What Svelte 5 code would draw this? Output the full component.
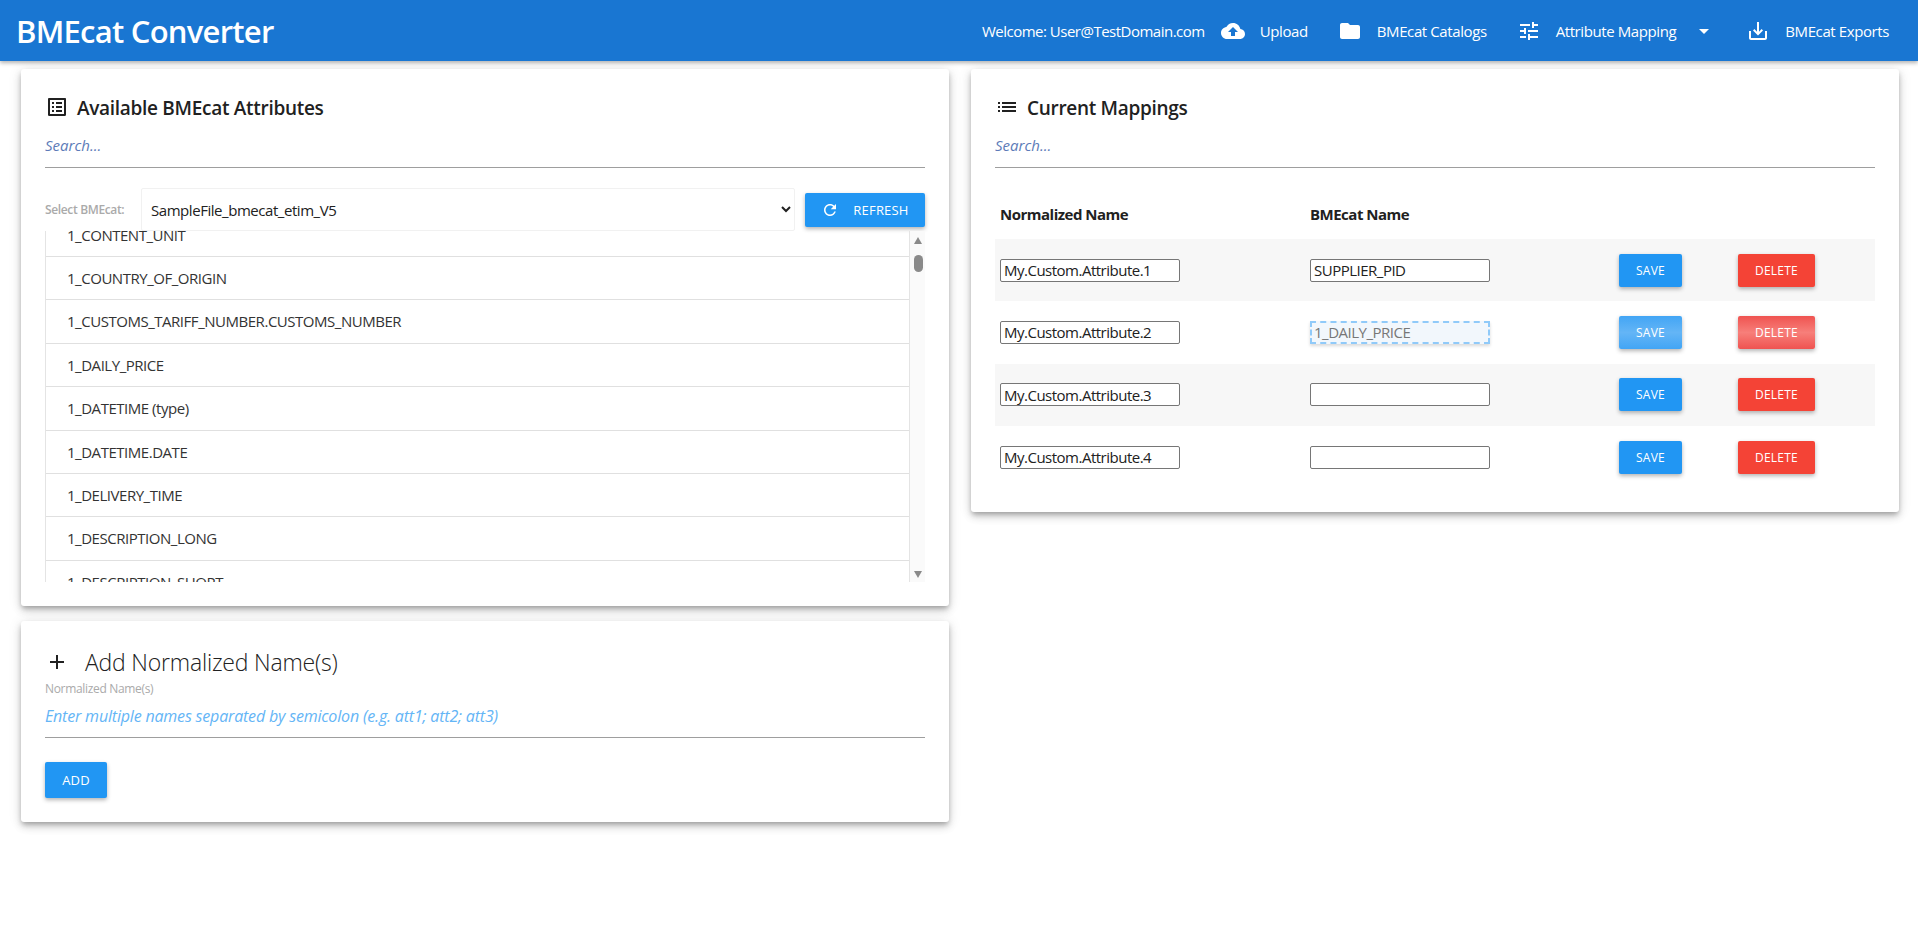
<script>
	const icons = {
		listAlt: 'M19 5v14H5V5h14m1.1-2H3.9c-.5 0-.9.4-.9.9v16.2c0 .4.4.9.9.9h16.2c.4 0 .9-.5.9-.9V3.9c0-.5-.5-.9-.9-.9zM11 7h6v2h-6V7zm0 4h6v2h-6v-2zm0 4h6v2h-6zM7 7h2v2H7zm0 4h2v2H7zm0 4h2v2H7z',
		list: 'M3 13h2v-2H3v2zm0 4h2v-2H3v2zm0-8h2V7H3v2zm4 4h14v-2H7v2zm0 4h14v-2H7v2zM7 7v2h14V7H7z',
		upload: 'M19.35 10.04C18.67 6.59 15.64 4 12 4 9.11 4 6.6 5.64 5.35 8.04 2.34 8.36 0 10.91 0 14c0 3.31 2.69 6 6 6h13c2.76 0 5-2.24 5-5 0-2.64-2.05-4.78-4.65-4.96zM14 13v4h-4v-4H7l5-5 5 5h-3z',
		folder: 'M10 4H4c-1.1 0-1.99.9-1.99 2L2 18c0 1.1.9 2 2 2h16c1.1 0 2-.9 2-2V8c0-1.1-.9-2-2-2h-8l-2-2z',
		tune: 'M3 17v2h6v-2H3zM3 5v2h10V5H3zm10 16v-2h8v-2h-8v-2h-2v6h2zM7 9v2H3v2h4v2h2V9H7zm14 4v-2H11v2h10zm-6-4h2V7h4V5h-4V3h-2v6z',
		caret: 'M7 10l5 5 5-5z',
		exports: 'M19 12v7H5v-7H3v7c0 1.1.9 2 2 2h14c1.1 0 2-.9 2-2v-7h-2zm-6 .67l2.59-2.58L17 11.5l-5 5-5-5 1.41-1.41L11 12.67V3h2z',
		refresh: 'M17.65 6.35C16.2 4.9 14.21 4 12 4c-4.42 0-7.99 3.58-7.99 8s3.57 8 7.99 8c3.73 0 6.84-2.55 7.73-6h-2.08c-.82 2.33-3.04 4-5.65 4-3.31 0-6-2.69-6-6s2.69-6 6-6c1.66 0 3.14.69 4.22 1.78L13 11h7V4l-2.35 2.35z',
		plus: 'M19 13h-6v6h-2v-6H5v-2h6V5h2v6h6v2z'
	};

	const nav = [
		{ label: 'Upload', icon: icons.upload },
		{ label: 'BMEcat Catalogs', icon: icons.folder },
		{ label: 'Attribute Mapping', icon: icons.tune, caret: true },
		{ label: 'BMEcat Exports', icon: icons.exports }
	];

	const attributes = [
		'1_CONTENT_UNIT',
		'1_COUNTRY_OF_ORIGIN',
		'1_CUSTOMS_TARIFF_NUMBER.CUSTOMS_NUMBER',
		'1_DAILY_PRICE',
		'1_DATETIME (type)',
		'1_DATETIME.DATE',
		'1_DELIVERY_TIME',
		'1_DESCRIPTION_LONG',
		'1_DESCRIPTION_SHORT'
	];

	const mappings = [
		{ name: 'My.Custom.Attribute.1', bmecat: 'SUPPLIER_PID' },
		{ name: 'My.Custom.Attribute.2', bmecat: '1_DAILY_PRICE', dragging: true },
		{ name: 'My.Custom.Attribute.3', bmecat: '' },
		{ name: 'My.Custom.Attribute.4', bmecat: '' }
	];
</script>

{#snippet icon(d, size = 24)}
	<svg class="icon" width={size} height={size} viewBox="0 0 24 24" fill="currentColor" aria-hidden="true">
		<path {d} />
	</svg>
{/snippet}

<header class="topbar">
	<h1 class="brand">BMEcat Converter</h1>
	<nav class="nav">
		<span class="welcome">Welcome: User@TestDomain.com</span>
		{#each nav as item}
			<a class="nav-item" href="#top">
				{@render icon(item.icon)}
				<span class="nav-label">{item.label}</span>
				{#if item.caret}
					<span class="caret">{@render icon(icons.caret)}</span>
				{/if}
			</a>
		{/each}
	</nav>
</header>

<main class="page">
	<div class="column">
		<section class="card">
			<h2 class="card-title">
				{@render icon(icons.listAlt)}
				<span>Available BMEcat Attributes</span>
			</h2>
			<input class="search" type="text" placeholder="Search..." />
			<div class="select-row">
				<label class="select-label" for="bmecat">Select BMEcat:</label>
				<select id="bmecat" class="select">
					<option>SampleFile_bmecat_etim_V5</option>
				</select>
				<button class="btn btn-refresh">
					{@render icon(icons.refresh, 18)}
					<span>Refresh</span>
				</button>
			</div>
			<div class="list-box">
				<ul class="attr-list">
					{#each attributes as attr}
						<li class="attr">{attr}</li>
					{/each}
				</ul>
				<div class="scrollbar">
					<span class="arrow-up"></span>
					<span class="thumb"></span>
					<span class="arrow-down"></span>
				</div>
			</div>
		</section>

		<section class="card">
			<h2 class="add-title">
				{@render icon(icons.plus)}
				<span>Add Normalized Name(s)</span>
			</h2>
			<label class="add-label" for="names">Normalized Name(s)</label>
			<input
				id="names"
				class="add-input"
				type="text"
				placeholder="Enter multiple names separated by semicolon (e.g. att1; att2; att3)"
			/>
			<button class="btn btn-add">Add</button>
		</section>
	</div>

	<div class="column">
		<section class="card">
			<h2 class="card-title">
				{@render icon(icons.list)}
				<span>Current Mappings</span>
			</h2>
			<input class="search" type="text" placeholder="Search..." />
			<div class="table">
				<div class="row head">
					<div>Normalized Name</div>
					<div>BMEcat Name</div>
				</div>
				{#each mappings as m}
					<div class="row" class:drag={m.dragging}>
						<div><input class="cell-input" type="text" value={m.name} /></div>
						<div><input class="cell-input bmecat" type="text" value={m.bmecat} /></div>
						<div><button class="btn btn-save">Save</button></div>
						<div><button class="btn btn-delete">Delete</button></div>
					</div>
				{/each}
			</div>
		</section>
	</div>
</main>

<style>
	:global(body) {
		background: #fff;
		font-family: 'Open Sans', 'Noto Sans', sans-serif;
		color: #212121;
	}

	.topbar {
		display: flex;
		align-items: center;
		justify-content: space-between;
		height: 61px;
		padding: 0 14px 0 16px;
		background: #1976d2;
		color: #fff;
		box-shadow: 0 2px 4px rgba(0, 0, 0, 0.3);
		position: relative;
	}

	.brand {
		margin: 0;
		font-size: 31px;
		font-weight: 600;
		letter-spacing: -0.75px;
	}

	.nav {
		display: flex;
		align-items: center;
		font-size: 15px;
		letter-spacing: -0.4px;
	}

	.welcome {
		margin-right: 1px;
		letter-spacing: -0.5px;
	}

	.nav-item {
		display: flex;
		align-items: center;
		padding: 0 15px;
		color: #fff;
		text-decoration: none;
	}

	.nav-label {
		margin-left: 15px;
	}

	.caret {
		display: flex;
		margin-left: 16px;
	}

	.icon {
		flex: none;
		display: block;
	}

	.page {
		display: grid;
		grid-template-columns: 1fr 1fr;
		column-gap: 22px;
		align-items: start;
		padding: 8px 19px 40px 21px;
	}

	.column {
		display: flex;
		flex-direction: column;
		gap: 15px;
	}

	.card {
		padding: 24px;
		background: #fff;
		border-radius: 3px;
		box-shadow: 0 3px 5px -1px rgba(0, 0, 0, 0.25), 0 5px 8px rgba(0, 0, 0, 0.14), 0 1px 14px rgba(0, 0, 0, 0.1);
	}

	.card-title {
		display: flex;
		align-items: center;
		gap: 8px;
		height: 28px;
		margin: 0;
		font-size: 19px;
		font-weight: 600;
		letter-spacing: -0.3px;
		color: #212121;
	}

	.card-title span {
		padding-top: 2px;
	}

	.search {
		display: block;
		box-sizing: border-box;
		width: 100%;
		height: 43px;
		margin-top: 4px;
		padding: 0 0 3px;
		border: 0;
		border-bottom: 1px solid #9e9e9e;
		outline: 0;
		background: transparent;
		font: italic 15px 'Open Sans', sans-serif;
	}

	.search::placeholder {
		color: #5c7bb8;
	}

	.select-row {
		display: flex;
		align-items: center;
		height: 43px;
		margin-top: 20px;
	}

	.select-label {
		width: 96px;
		flex: none;
		font-size: 12px;
		font-weight: 600;
		letter-spacing: -0.35px;
		color: #aaa;
	}

	.select {
		flex: 1;
		min-width: 0;
		height: 43px;
		padding: 0 5px;
		border: 1px solid #f1f1f1;
		border-radius: 2px;
		background: #fff;
		color: #212121;
		font: 15px 'Open Sans', sans-serif;
		letter-spacing: -0.45px;
	}

	.btn {
		display: inline-flex;
		align-items: center;
		justify-content: center;
		border: 0;
		border-radius: 2px;
		color: #fff;
		font: 12px 'Open Sans', sans-serif;
		letter-spacing: 0.2px;
		text-transform: uppercase;
		box-shadow: 0 2px 4px rgba(0, 0, 0, 0.3);
	}

	.btn-refresh {
		flex: none;
		gap: 14px;
		width: 120px;
		height: 34px;
		margin-left: 10px;
		background: #2196f3;
		font-size: 13px;
	}

	.list-box {
		display: flex;
		height: 351px;
		overflow: hidden;
	}

	.attr-list {
		flex: 1;
		min-width: 0;
		margin: 0;
		padding: 0;
		list-style: none;
		border-left: 1px solid #e4e4e4;
		border-right: 1px solid #e4e4e4;
	}

	.attr {
		box-sizing: border-box;
		height: 43.4px;
		padding-left: 21px;
		border-bottom: 1px solid #e0e0e0;
		font-size: 15px;
		line-height: 43.5px;
		letter-spacing: -0.47px;
		color: #333;
	}

	.attr:first-child {
		margin-top: -17.4px;
	}

	.scrollbar {
		position: relative;
		flex: none;
		width: 15px;
		background: #fafafa;
	}

	.arrow-up,
	.arrow-down {
		position: absolute;
		left: 3.5px;
		width: 0;
		height: 0;
		border-left: 4.5px solid transparent;
		border-right: 4.5px solid transparent;
	}

	.arrow-up {
		top: 6px;
		border-bottom: 7px solid #8a8a8a;
	}

	.arrow-down {
		bottom: 4px;
		border-top: 7px solid #8a8a8a;
	}

	.thumb {
		position: absolute;
		top: 24px;
		left: 3.5px;
		width: 9px;
		height: 17px;
		border-radius: 5px;
		background: #8a8a8a;
	}

	.add-title {
		display: flex;
		align-items: center;
		gap: 16px;
		height: 34px;
		margin: 0;
		font-size: 23px;
		font-weight: 300;
		letter-spacing: -0.2px;
		color: #212121;
	}

	.add-label {
		display: block;
		margin-top: 2px;
		font-size: 12px;
		line-height: 15px;
		letter-spacing: -0.33px;
		color: #aaa;
	}

	.add-input {
		display: block;
		box-sizing: border-box;
		width: 100%;
		height: 42px;
		padding: 0 0 2px;
		border: 0;
		border-bottom: 1px solid #9e9e9e;
		outline: 0;
		background: transparent;
		font: italic 16px 'Open Sans', sans-serif;
		letter-spacing: -0.18px;
	}

	.add-input::placeholder {
		color: #64b5f6;
	}

	.btn-add {
		width: 62px;
		height: 36px;
		margin-top: 24px;
		background: #2196f3;
		font-size: 13px;
		display: flex;
	}

	.table {
		margin-top: 20px;
	}

	.row {
		display: grid;
		grid-template-columns: 310px 309px 119px 1fr;
		align-items: center;
		height: 62.33px;
		padding-left: 5px;
		box-sizing: border-box;
	}

	.row:nth-child(even) {
		background: #f7f7f7;
	}

	.head {
		height: 51px;
		padding-left: 5px;
		font-size: 15px;
		font-weight: 700;
		letter-spacing: -0.5px;
		color: #212121;
	}

	.cell-input {
		display: block;
		box-sizing: border-box;
		width: 180px;
		height: 23px;
		padding: 0 3px;
		border: 1px solid #767676;
		border-radius: 2px;
		background: #fff;
		color: #212121;
		font: 15px 'Open Sans', sans-serif;
		letter-spacing: -0.5px;
	}

	.drag .bmecat {
		border: 2px dashed #90caf9;
		border-radius: 0;
		padding: 0 2px;
		background: #f2f7fc;
		color: #777;
		box-shadow: 0 2px 3px rgba(0, 0, 0, 0.15);
	}

	.btn-save {
		width: 63px;
		height: 33px;
		background: #2196f3;
	}

	.btn-delete {
		width: 77px;
		height: 33px;
		background: #f44336;
	}

	.drag .btn-save {
		background: linear-gradient(#42a5f5, #64b5f6 50%, #42a5f5);
	}

	.drag .btn-delete {
		background: linear-gradient(#ef5350, #f77f7a 50%, #ef5350);
	}
</style>
